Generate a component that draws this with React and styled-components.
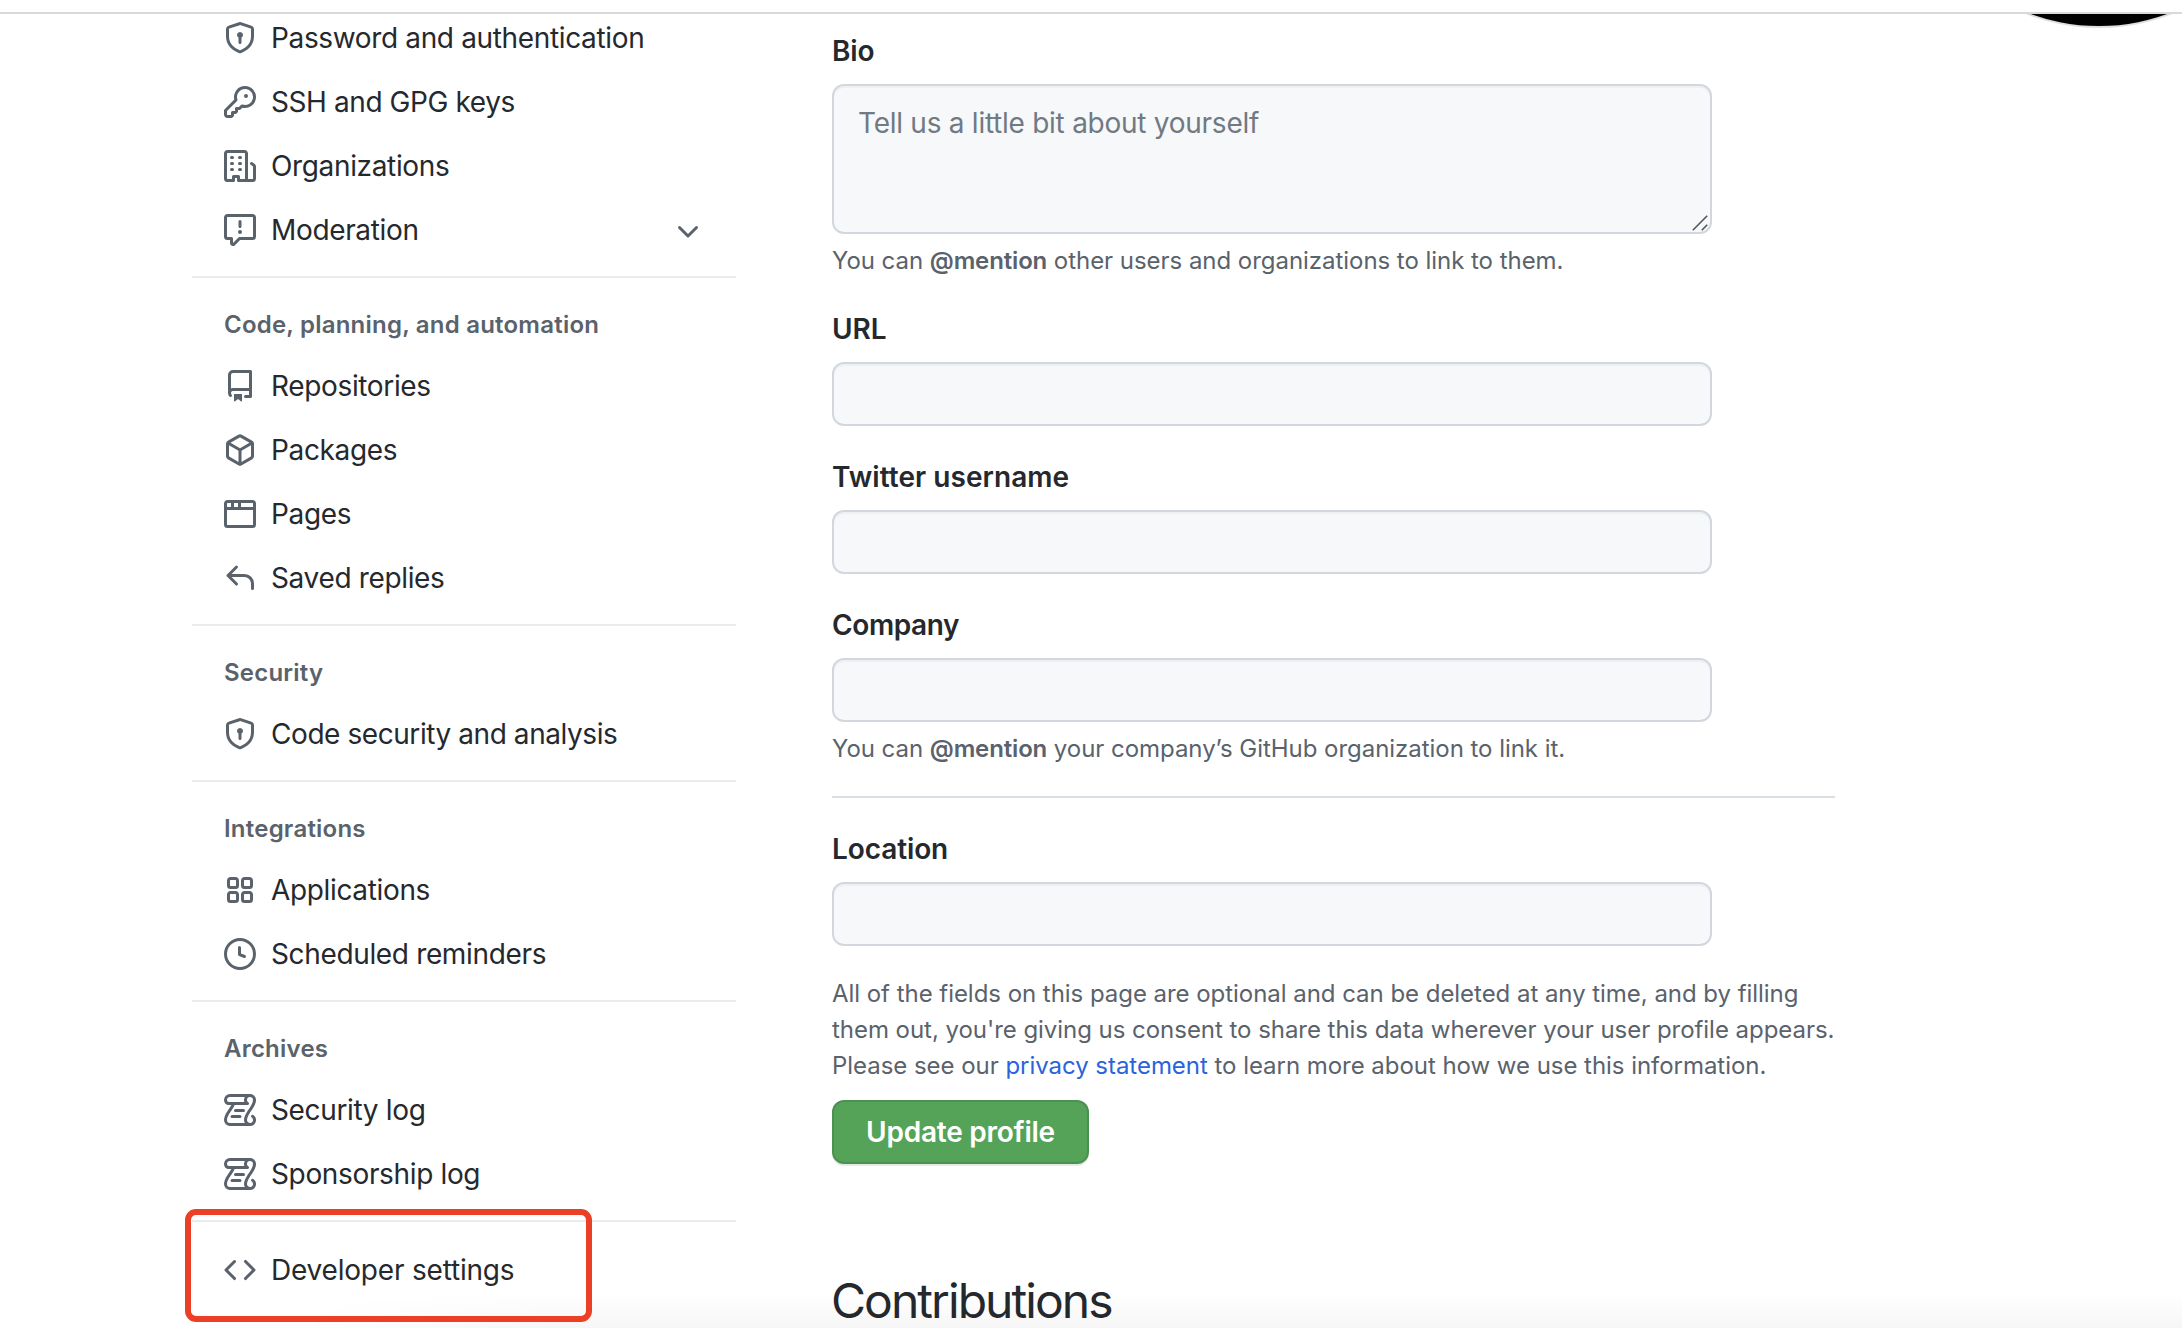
import React from 'react';
import styled, { createGlobalStyle } from 'styled-components';

const colors = {
  text: '#25292e',
  muted: '#5a626c',
  placeholder: '#717983',
  link: '#2b63dc',
  fieldBg: '#f6f8fa',
  fieldBorder: '#d2d7de',
  rule: '#d9dee3',
  ruleLight: '#e8ecef',
  green: '#55a358',
  greenBorder: '#4b9150',
  red: '#eb4026',
};

const icons = {
  shieldLock:
    'M8.533.133a1.75 1.75 0 00-1.066 0l-5.25 1.68A1.75 1.75 0 001 3.48V7c0 1.566.32 3.182 1.303 4.682.983 1.498 2.585 2.813 5.032 3.855a1.7 1.7 0 001.33 0c2.447-1.042 4.049-2.357 5.032-3.855C14.68 10.182 15 8.566 15 7V3.48a1.75 1.75 0 00-1.217-1.667L8.533.133zm-.61 1.429a.25.25 0 01.153 0l5.25 1.68a.25.25 0 01.174.238V7c0 1.358-.275 2.666-1.057 3.86-.784 1.194-2.121 2.34-4.366 3.297a.2.2 0 01-.154 0c-2.245-.956-3.582-2.104-4.366-3.298C2.775 9.666 2.5 8.36 2.5 7V3.48a.25.25 0 01.174-.237l5.25-1.68zM9.5 6.5a1.5 1.5 0 01-.75 1.3v2.45a.75.75 0 01-1.5 0V7.8A1.5 1.5 0 119.5 6.5z',
  key:
    'M6.5 5.5a4 4 0 112.731 3.795.75.75 0 00-.768.18L7.44 10.5H6.25a.75.75 0 00-.75.75v1.19l-.06.06H4.25a.75.75 0 00-.75.75v1.19l-.06.06H1.75a.25.25 0 01-.25-.25v-1.69l5.024-5.023a.75.75 0 00.181-.768A3.995 3.995 0 016.5 5.5zm4-5.5a5.5 5.5 0 00-5.348 6.788L.22 11.72a.75.75 0 00-.22.53v2C0 15.216.784 16 1.75 16h2a.75.75 0 00.53-.22l.5-.5a.75.75 0 00.22-.53V14h.75a.75.75 0 00.53-.22l.5-.5a.75.75 0 00.22-.53V12h.75a.75.75 0 00.53-.22l.932-.932A5.5 5.5 0 1010.5 0zm.5 6a1 1 0 100-2 1 1 0 000 2z',
  organization:
    'M1.5 14.25c0 .138.112.25.25.25H4v-1.25a.75.75 0 01.75-.75h2.5a.75.75 0 01.75.75v1.25h2.25a.25.25 0 00.25-.25V1.75a.25.25 0 00-.25-.25h-8.5a.25.25 0 00-.25.25v12.5zM1.75 16A1.75 1.75 0 010 14.25V1.75C0 .784.784 0 1.75 0h8.5C11.216 0 12 .784 12 1.75v12.5c0 .085-.006.168-.018.25h2.268a.25.25 0 00.25-.25V8.285a.25.25 0 00-.111-.208l-1.055-.703a.75.75 0 11.832-1.248l1.055.703c.487.325.779.871.779 1.456v5.965A1.75 1.75 0 0114.25 16h-3.5a.75.75 0 01-.197-.026c-.099.017-.2.026-.303.026h-3a.75.75 0 01-.75-.75V14h-1v1.25a.75.75 0 01-.75.75h-3zM3 3.75A.75.75 0 013.75 3h.5a.75.75 0 010 1.5h-.5A.75.75 0 013 3.75zM3.75 6a.75.75 0 000 1.5h.5a.75.75 0 000-1.5h-.5zM3 9.75A.75.75 0 013.75 9h.5a.75.75 0 010 1.5h-.5A.75.75 0 013 9.75zM7.75 9a.75.75 0 000 1.5h.5a.75.75 0 000-1.5h-.5zM7 6.75A.75.75 0 017.75 6h.5a.75.75 0 010 1.5h-.5A.75.75 0 017 6.75zM7.75 3a.75.75 0 000 1.5h.5a.75.75 0 000-1.5h-.5z',
  report:
    'M1.75 1.5a.25.25 0 00-.25.25v9.5c0 .138.112.25.25.25h2a.75.75 0 01.75.75v2.19l2.72-2.72a.75.75 0 01.53-.22h6.5a.25.25 0 00.25-.25v-9.5a.25.25 0 00-.25-.25H1.75zM0 1.75C0 .784.784 0 1.75 0h12.5C15.216 0 16 .784 16 1.75v9.5A1.75 1.75 0 0114.25 13H8.06l-2.573 2.573A1.457 1.457 0 013 14.543V13H1.75A1.75 1.75 0 010 11.25v-9.5zM9 9a1 1 0 11-2 0 1 1 0 012 0zm-.25-5.25a.75.75 0 00-1.5 0v2.5a.75.75 0 001.5 0v-2.5z',
  chevronDown:
    'M12.78 6.22a.75.75 0 010 1.06l-4.25 4.25a.75.75 0 01-1.06 0L3.22 7.28a.75.75 0 011.06-1.06L8 9.94l3.72-3.72a.75.75 0 011.06 0z',
  repo:
    'M2 2.5A2.5 2.5 0 014.5 0h8.75a.75.75 0 01.75.75v12.5a.75.75 0 01-.75.75h-2.5a.75.75 0 110-1.5h1.75v-2h-8a1 1 0 00-.714 1.7.75.75 0 01-1.072 1.05A2.495 2.495 0 012 11.5v-9zm10.5-1V9h-8c-.356 0-.694.074-1 .208V2.5a1 1 0 011-1h8zM5 12.25v3.25a.25.25 0 00.4.2l1.45-1.087a.25.25 0 01.3 0L8.6 15.7a.25.25 0 00.4-.2v-3.25a.25.25 0 00-.25-.25h-3.5a.25.25 0 00-.25.25z',
  package:
    'M8.878.392a1.75 1.75 0 00-1.756 0l-5.25 3.045A1.75 1.75 0 001 4.951v6.098c0 .624.332 1.2.872 1.514l5.25 3.045a1.75 1.75 0 001.756 0l5.25-3.045c.54-.313.872-.89.872-1.514V4.951c0-.624-.332-1.2-.872-1.514L8.878.392zM7.875 1.69a.25.25 0 01.25 0l4.63 2.685L8 7.133 3.245 4.375l4.63-2.685zM2.5 5.677v5.372c0 .09.047.171.125.216l4.625 2.683V8.432L2.5 5.677zm6.25 8.271l4.625-2.683a.25.25 0 00.125-.216V5.677L8.75 8.432v5.516z',
  browser:
    'M0 2.75C0 1.784.784 1 1.75 1h12.5c.966 0 1.75.784 1.75 1.75v10.5A1.75 1.75 0 0114.25 15H1.75A1.75 1.75 0 010 13.25V2.75zm1.75-.25a.25.25 0 00-.25.25V4.5h2v-2H1.75zM5 2.5v2h2v-2H5zm3.5 0v2h6V2.75a.25.25 0 00-.25-.25H8.5zm6 3.5h-13v7.25c0 .138.112.25.25.25h12.5a.25.25 0 00.25-.25V6z',
  reply:
    'M6.78 1.97a.75.75 0 010 1.06L3.81 6h6.44A4.75 4.75 0 0115 10.75v2.5a.75.75 0 01-1.5 0v-2.5a3.25 3.25 0 00-3.25-3.25H3.81l2.97 2.97a.75.75 0 11-1.06 1.06L1.47 7.28a.75.75 0 010-1.06l4.25-4.25a.75.75 0 011.06 0z',
  apps:
    'M1.5 3.25c0-.966.784-1.75 1.75-1.75h2.5c.966 0 1.75.784 1.75 1.75v2.5A1.75 1.75 0 015.75 7.5h-2.5A1.75 1.75 0 011.5 5.75v-2.5zM3.25 3a.25.25 0 00-.25.25v2.5c0 .138.112.25.25.25h2.5A.25.25 0 006 5.75v-2.5A.25.25 0 005.75 3h-2.5zM8.5 3.25c0-.966.784-1.75 1.75-1.75h2.5c.966 0 1.75.784 1.75 1.75v2.5a1.75 1.75 0 01-1.75 1.75h-2.5A1.75 1.75 0 018.5 5.75v-2.5zM10.25 3a.25.25 0 00-.25.25v2.5c0 .138.112.25.25.25h2.5a.25.25 0 00.25-.25v-2.5a.25.25 0 00-.25-.25h-2.5zM1.5 10.25c0-.966.784-1.75 1.75-1.75h2.5c.966 0 1.75.784 1.75 1.75v2.5a1.75 1.75 0 01-1.75 1.75h-2.5a1.75 1.75 0 01-1.75-1.75v-2.5zM3.25 10a.25.25 0 00-.25.25v2.5c0 .138.112.25.25.25h2.5a.25.25 0 00.25-.25v-2.5a.25.25 0 00-.25-.25h-2.5zM8.5 10.25c0-.966.784-1.75 1.75-1.75h2.5c.966 0 1.75.784 1.75 1.75v2.5a1.75 1.75 0 01-1.75 1.75h-2.5a1.75 1.75 0 01-1.75-1.75v-2.5zM10.25 10a.25.25 0 00-.25.25v2.5c0 .138.112.25.25.25h2.5a.25.25 0 00.25-.25v-2.5a.25.25 0 00-.25-.25h-2.5z',
  clock:
    'M1.5 8a6.5 6.5 0 1113 0 6.5 6.5 0 01-13 0zM8 0a8 8 0 100 16A8 8 0 008 0zm.5 4.75a.75.75 0 00-1.5 0v3.5a.75.75 0 00.471.696l2.5 1a.75.75 0 00.557-1.392L8.5 7.742V4.75z',
  log:
    'M5 8.25a.75.75 0 01.75-.75h4a.75.75 0 010 1.5h-4A.75.75 0 015 8.25zM4 10.5A.75.75 0 004 12h4a.75.75 0 000-1.5H4zM13-.005c1.654 0 3 1.328 3 3 0 .982-.338 1.933-.783 2.818-.443.879-1.028 1.758-1.582 2.588l-.011.017c-.568.853-1.104 1.659-1.501 2.446-.398.789-.623 1.494-.623 2.136a1.5 1.5 0 102.333-1.248.75.75 0 01.834-1.246A3 3 0 0113 16H3a3 3 0 01-3-3c0-1.582.891-3.135 1.777-4.506.209-.322.418-.637.623-.946.473-.709.923-1.386 1.287-2.048H2.51c-.576 0-1.381-.133-1.907-.783A2.68 2.68 0 010 2.995a3 3 0 013-3zm0 1.5a1.5 1.5 0 00-1.5 1.5c0 .476.223.834.667 1.132A.75.75 0 0111.75 5.5H5.368c-.467 1.003-1.141 2.015-1.773 2.963-.192.289-.381.571-.558.845C2.13 10.711 1.5 11.916 1.5 13A1.5 1.5 0 003 14.5h7.401A2.989 2.989 0 0110 13c0-.979.338-1.928.784-2.812.441-.874 1.023-1.748 1.575-2.576l.017-.026c.568-.853 1.103-1.658 1.501-2.448.398-.79.623-1.497.623-2.143 0-.838-.669-1.5-1.5-1.5zm-10 0a1.5 1.5 0 00-1.5 1.5c0 .321.1.569.27.778.097.12.325.227.74.227h7.674A2.737 2.737 0 0110 2.995c0-.546.146-1.059.401-1.5z',
  code:
    'M4.72 3.22a.75.75 0 011.06 1.06L2.06 8l3.72 3.72a.75.75 0 11-1.06 1.06L.47 8.53a.75.75 0 010-1.06l4.25-4.25zm6.56 0a.75.75 0 10-1.06 1.06L13.94 8l-3.72 3.72a.75.75 0 101.06 1.06l4.25-4.25a.75.75 0 000-1.06l-4.25-4.25z',
};

const sections = [
  {
    items: [
      { icon: 'shieldLock', label: 'Password and authentication' },
      { icon: 'key', label: 'SSH and GPG keys', tracking: '-0.41px' },
      { icon: 'organization', label: 'Organizations' },
      { icon: 'report', label: 'Moderation', expandable: true },
    ],
  },
  {
    title: 'Code, planning, and automation',
    items: [
      { icon: 'repo', label: 'Repositories' },
      { icon: 'package', label: 'Packages' },
      { icon: 'browser', label: 'Pages' },
      { icon: 'reply', label: 'Saved replies' },
    ],
  },
  {
    title: 'Security',
    items: [
      { icon: 'shieldLock', label: 'Code security and analysis', tracking: '-0.43px' },
    ],
  },
  {
    title: 'Integrations',
    items: [
      { icon: 'apps', label: 'Applications' },
      { icon: 'clock', label: 'Scheduled reminders' },
    ],
  },
  {
    title: 'Archives',
    items: [
      { icon: 'log', label: 'Security log' },
      { icon: 'log', label: 'Sponsorship log' },
    ],
  },
  {
    items: [
      { icon: 'code', label: 'Developer settings', tracking: '-0.2px', highlighted: true },
    ],
  },
];

function Icon({ name }) {
  return (
    <IconSvg viewBox="0 0 16 16" aria-hidden="true">
      <path fillRule="evenodd" d={icons[name]} />
    </IconSvg>
  );
}

function NavItem({ icon, label, tracking, expandable, highlighted }) {
  return (
    <NavRow>
      <NavLink href="#" $tracking={tracking}>
        <Icon name={icon} />
        <span>{label}</span>
      </NavLink>
      {expandable && <Icon name="chevronDown" />}
      {highlighted && <Highlight />}
    </NavRow>
  );
}

function TextField({ id, label, tracking, children }) {
  return (
    <Field>
      <Label htmlFor={id} $tracking={tracking}>{label}</Label>
      <Input id={id} type="text" />
      {children}
    </Field>
  );
}

export default function App() {
  return (
    <Page>
      <GlobalStyle />
      <TopBar />
      <Content>
        <Sidebar>
          {sections.map((section, index) => (
            <NavSection key={index}>
              {section.title && <NavTitle>{section.title}</NavTitle>}
              {section.items.map((item) => (
                <NavItem key={item.label} {...item} />
              ))}
            </NavSection>
          ))}
        </Sidebar>

        <Main>
          <Field>
            <Label htmlFor="bio">Bio</Label>
            <TextareaWrap>
              <Textarea id="bio" placeholder="Tell us a little bit about yourself" />
              <ResizeGrip viewBox="0 0 16 16">
                <path d="M0.8 15.2L15.2 0.8M9.8 15.2L15.2 9.8" />
              </ResizeGrip>
            </TextareaWrap>
            <Note>
              You can <strong>@mention</strong> other users and organizations to link to them.
            </Note>
          </Field>
          <TextField id="url" label="URL" />
          <TextField id="twitter" label="Twitter username" tracking="0.05px" />
          <TextField id="company" label="Company" tracking="-0.4px">
            <Note>
              You can <strong>@mention</strong> your company’s GitHub organization to link it.
            </Note>
          </TextField>
          <Rule />
          <TextField id="location" label="Location" />

          <Consent>
            All of the fields on this page are optional and can be deleted at any time, and by filling
            <br />
            them out, you're giving us consent to share this data wherever your user profile appears.
            <br />
            Please see our <a href="#">privacy statement</a> to learn more about how we use this information.
          </Consent>
          <SubmitButton type="button">Update profile</SubmitButton>

          <Heading>Contributions</Heading>
        </Main>

        <Avatar />
      </Content>
      <BottomShade />
    </Page>
  );
}

const GlobalStyle = createGlobalStyle`
  * {
    box-sizing: border-box;
  }

  body {
    margin: 0;
    background: #fff;
    overflow: hidden;
  }
`;

const Page = styled.div`
  position: relative;
  display: flex;
  flex-direction: column;
  height: 1328px;
  overflow: hidden;

  background: #fff;
  color: ${colors.text};
  font-family: Inter, 'Liberation Sans', sans-serif;
  font-size: 28px;
  line-height: 42px;
`;

const TopBar = styled.div`
  position: relative;
  z-index: 1;
  flex: none;
  height: 14px;
  background: #fff;
  border-bottom: 2px solid #d9d9d9;
`;

const Content = styled.div`
  display: flex;
  align-items: flex-start;
  flex: 1;
  min-height: 0;
  padding-left: 192px;
`;

const Sidebar = styled.nav`
  flex: none;
  width: 544px;
  margin-top: -8px;
`;

const NavSection = styled.div`
  & + & {
    margin-top: 14px;
    padding-top: 16px;
    border-top: 2px solid ${colors.ruleLight};
  }
`;

const NavTitle = styled.h3`
  margin: 0;
  padding: 13px 32px 11px;

  color: ${colors.muted};
  font-size: 24px;
  font-weight: 600;
  line-height: 36px;
  letter-spacing: 0.22px;
`;

const NavRow = styled.div`
  position: relative;
  display: flex;
  align-items: center;
  justify-content: space-between;
  height: 64px;
  padding: 0 32px;
`;

const NavLink = styled.a`
  display: flex;
  align-items: center;
  gap: 15px;

  color: ${colors.text};
  letter-spacing: ${(props) => props.$tracking || '-0.35px'};
  text-decoration: none;
`;

const IconSvg = styled.svg`
  flex: none;
  width: 32px;
  height: 32px;
  fill: ${colors.muted};
  overflow: visible;
`;

const Highlight = styled.div`
  position: absolute;
  z-index: 3;
  top: -29px;
  left: -7.5px;
  width: 407px;
  height: 113px;
  border: 6px solid ${colors.red};
  border-radius: 11px;
`;

const Main = styled.main`
  flex: none;
  width: 1003px;
  margin-left: 96px;
  padding-top: 16px;
  white-space: nowrap;
`;

const Field = styled.div`
  display: flex;
  flex-direction: column;
  width: 880px;
  margin-bottom: 30px;
`;

const Label = styled.label`
  margin-bottom: 12px;
  font-weight: 600;
  letter-spacing: ${(props) => props.$tracking || '-0.1px'};
`;

const Input = styled.input`
  width: 100%;
  height: 64px;
  padding: 10px 24px;

  background: ${colors.fieldBg};
  border: 2px solid ${colors.fieldBorder};
  border-radius: 12px;
  box-shadow: inset 0 2px 0 rgba(208, 215, 222, 0.2);
  outline: none;
  color: ${colors.text};
  font: inherit;
`;

const TextareaWrap = styled.div`
  position: relative;
  display: flex;
`;

const Textarea = styled(Input).attrs({ as: 'textarea' })`
  height: 150px;
  padding: 16px 24px;
  resize: none;
  letter-spacing: -0.26px;

  &::placeholder {
    color: ${colors.placeholder};
    opacity: 1;
  }
`;

const ResizeGrip = styled.svg`
  position: absolute;
  right: 4px;
  bottom: 3px;
  width: 16px;
  height: 16px;
  fill: none;
  stroke: #555;
  stroke-width: 1.6;
`;

const Note = styled.p`
  margin: 9px 0 -1px;
  color: ${colors.muted};
  font-size: 24px;
  line-height: 36px;
  letter-spacing: -0.04px;

  strong {
    font-weight: 600;
    letter-spacing: -0.15px;
  }
`;

const Rule = styled.hr`
  height: 2px;
  margin: 0 0 30px;
  border: 0;
  background: ${colors.rule};
`;

const Consent = styled(Note)`
  margin: 0 0 16px;

  a {
    color: ${colors.link};
    text-decoration: none;
  }
`;

const SubmitButton = styled.button`
  display: block;
  width: 257px;
  height: 64px;
  padding: 0;

  background: ${colors.green};
  border: 2px solid ${colors.greenBorder};
  border-radius: 12px;
  box-shadow: 0 2px 0 rgba(27, 31, 36, 0.1);
  color: #fff;
  font: inherit;
  font-weight: 600;
  letter-spacing: -0.24px;
`;

const Heading = styled.h2`
  margin: 111px 0 0 -1px;
  font-size: 48px;
  font-weight: 400;
  line-height: 52px;
  letter-spacing: -1.95px;
`;

/* Scrolled almost out of view, only its lower rim shows below the top bar */
const Avatar = styled.div`
  flex: none;
  width: 400px;
  height: 400px;
  margin: -388px 0 0 64px;
  border-radius: 50%;
  background: #000;
  box-shadow: 0 0 0 2px rgba(27, 31, 36, 0.15);
`;

const BottomShade = styled.div`
  position: absolute;
  right: 0;
  bottom: 0;
  left: 300px;
  height: 34px;
  background: linear-gradient(rgba(0, 0, 0, 0), rgba(0, 0, 0, 0.035));
  mask-image: linear-gradient(90deg, transparent, #000 260px);
  pointer-events: none;
`;
